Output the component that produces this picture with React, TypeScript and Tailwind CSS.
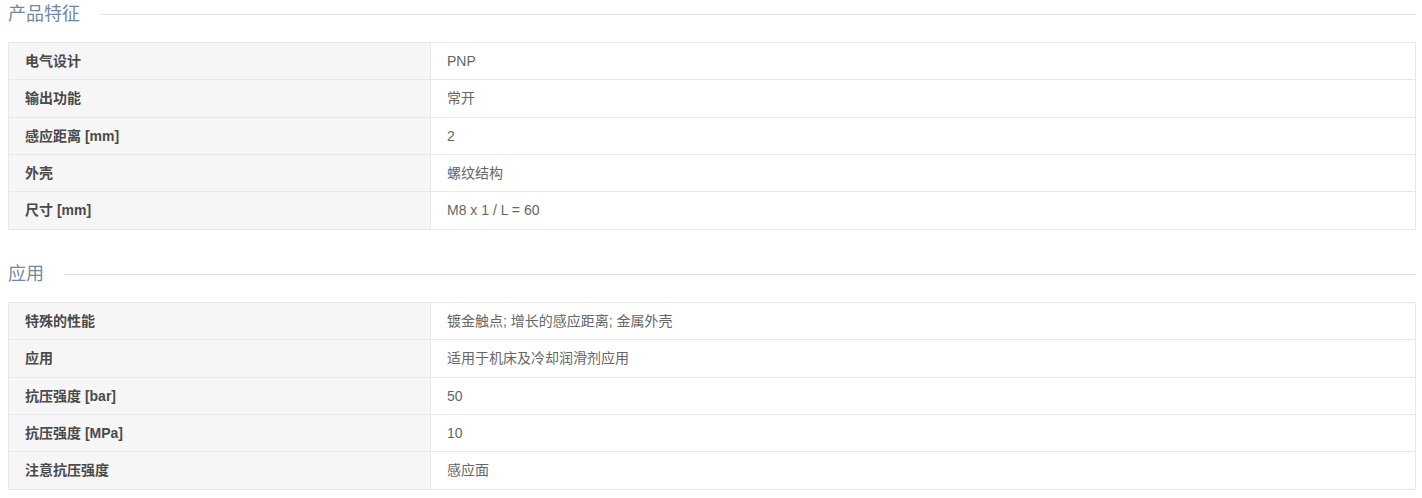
import React from "react";

type Row = { label: string; value: string };

const features: Row[] = [
  { label: "电气设计", value: "PNP" },
  { label: "输出功能", value: "常开" },
  { label: "感应距离 [mm]", value: "2" },
  { label: "外壳", value: "螺纹结构" },
  { label: "尺寸 [mm]", value: "M8 x 1 / L = 60" },
];

const application: Row[] = [
  { label: "特殊的性能", value: "镀金触点; 增长的感应距离; 金属外壳" },
  { label: "应用", value: "适用于机床及冷却润滑剂应用" },
  { label: "抗压强度 [bar]", value: "50" },
  { label: "抗压强度 [MPa]", value: "10" },
  { label: "注意抗压强度", value: "感应面" },
];

// row heights alternate a little in the original (37.4px average)
const heights = ["h-[36px]", "h-[38px]", "h-[37px]", "h-[37px]", "h-[38px]"];

function Section({ title, rows, className = "" }: { title: string; rows: Row[]; className?: string }) {
  return (
    <section className={className}>
      <div className="flex h-[28px] items-center gap-5">
        <h3 className="text-[18px] font-normal leading-none text-[#6f8aa2]">{title}</h3>
        <div className="h-px flex-1 bg-[#e3e3e3]" />
      </div>
      <div className="mt-[14px] border border-[#e8e8e8]">
        {rows.map((row, i) => (
          <div
            key={row.label}
            className={`flex ${heights[i]} ${i > 0 ? "border-t border-[#e8e8e8]" : ""}`}
          >
            <div className="flex w-[422px] shrink-0 items-center border-r border-[#e8e8e8] bg-[#f6f6f6] pl-[16px] text-[14px] font-bold text-[#4a4a4a]">
              {row.label}
            </div>
            <div className="flex flex-1 items-center pl-[16px] text-[14px] text-[#666]">
              {row.value}
            </div>
          </div>
        ))}
      </div>
    </section>
  );
}

export default function App() {
  return (
    <div
      className="w-[1416px] bg-white pl-2"
      style={{ fontFamily: '"Liberation Sans", "Noto Sans CJK SC", sans-serif' }}
    >
      <Section title="产品特征" rows={features} />
      <Section title="应用" rows={application} className="mt-[30px]" />
    </div>
  );
}
